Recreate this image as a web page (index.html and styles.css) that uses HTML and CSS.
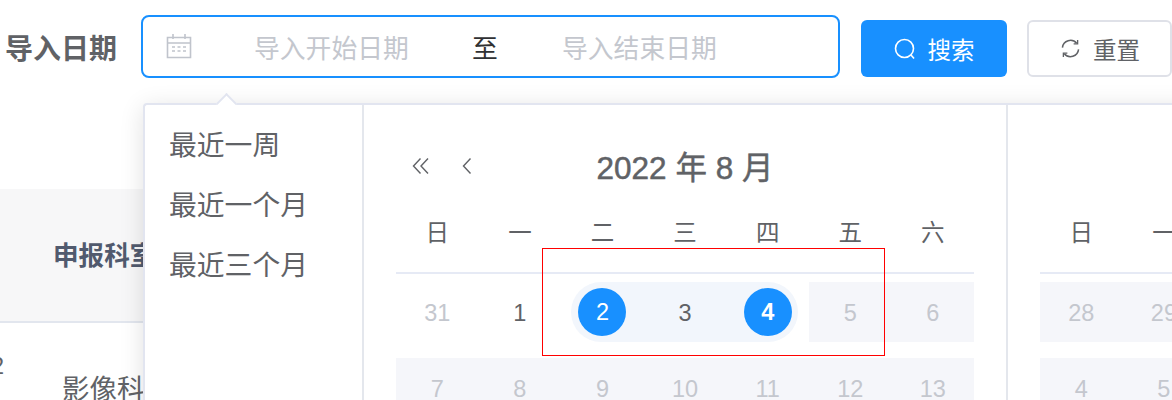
FILE: index.html
```html
<!DOCTYPE html>
<html lang="zh-CN">
<head>
<meta charset="utf-8">
<title>导入日期</title>
<link rel="stylesheet" href="styles.css">
</head>
<body>
<main class="page">
  <form class="filter">
    <span class="filter-label">导入日期</span>
    <div class="range">
      <svg class="cal-icon" viewBox="0 0 26 26" width="26" height="26" fill="none" stroke="#c0c4cc" stroke-width="1.6">
        <path d="M1.5 4.5h23v20h-23zM1.5 10h23M7 1v5M19 1v5"/>
        <path d="M6 14h3M11.5 14h3M17 14h3M6 18h3M11.5 18h3M17 18h3" stroke-width="1.4"/>
      </svg>
      <span class="range-input range-start-input">导入开始日期</span>
      <span class="range-sep">至</span>
      <span class="range-input range-end-input">导入结束日期</span>
    </div>
    <button type="button" class="btn btn-primary">
      <svg viewBox="0 0 22 22" width="22" height="22" fill="none" stroke="#fff" stroke-width="1.6"><circle cx="10.5" cy="10.5" r="9"/><path d="M17 17l3 3.5"/></svg>
      <span>搜索</span>
    </button>
    <button type="button" class="btn btn-default">
      <svg viewBox="0 0 20 20" width="19" height="19" fill="none" stroke="#606266" stroke-width="1.6"><path d="M1.5 9A8.5 8.5 0 0 1 16.5 4.5M18.5 11A8.5 8.5 0 0 1 3.5 15.5"/><path d="M17.5 1v4.2h-4.2M2.5 19v-4.2h4.2" stroke-width="1.4"/></svg>
      <span>重置</span>
    </button>
  </form>

  <section class="table">
    <div class="table-head"><span class="th">申报科室</span></div>
    <div class="table-row">
      <span class="row-index">2</span>
      <span class="td">影像科室</span>
    </div>
  </section>

  <div class="picker">
    <span class="picker-arrow"></span>
    <ul class="shortcuts">
      <li>最近一周</li>
      <li>最近一个月</li>
      <li>最近三个月</li>
    </ul>
    <div class="panel panel-left">
      <header class="panel-head">
        <svg viewBox="0 0 18 18" width="18" height="18" fill="none" stroke="#606266" stroke-width="1.4"><path d="M8.5 1.5L1.5 9l7 7.5M16 1.5L9 9l7 7.5"/></svg>
        <svg class="prev-month" viewBox="0 0 12 18" width="12" height="18" fill="none" stroke="#606266" stroke-width="1.4"><path d="M9.5 1.5L2.5 9l7 7.5"/></svg>
        <span class="panel-title">2022 年 8 月</span>
      </header>
      <div class="weekdays"><span>日</span><span>一</span><span>二</span><span>三</span><span>四</span><span>五</span><span>六</span></div>
      <div class="days">
        <span class="day muted">31</span>
        <span class="day">1</span>
        <span class="day range-first"><b class="dot">2</b></span>
        <span class="day in-range">3</span>
        <span class="day range-last"><b class="dot dot-bold">4</b></span>
        <span class="day off">5</span>
        <span class="day off">6</span>
        <span class="day off">7</span>
        <span class="day off">8</span>
        <span class="day off">9</span>
        <span class="day off">10</span>
        <span class="day off">11</span>
        <span class="day off">12</span>
        <span class="day off">13</span>
      </div>
    </div>
    <div class="panel panel-right">
      <div class="weekdays"><span>日</span><span>一</span></div>
      <div class="days">
        <span class="day off">28</span>
        <span class="day off">29</span>
        <span class="day off"></span>
        <span class="day off"></span>
        <span class="day off"></span>
        <span class="day off"></span>
        <span class="day off"></span>
        <span class="day off">4</span>
        <span class="day off">5</span>
      </div>
    </div>
  </div>

  <div class="annotation"></div>
</main>
</body>
</html>
```
FILE: styles.css
```css
* { box-sizing: border-box; }
html, body { margin: 0; padding: 0; }
body {
  width: 1172px;
  height: 400px;
  overflow: hidden;
  background: #fff;
  font-family: "Liberation Sans", "Noto Sans CJK SC", sans-serif;
  color: #606266;
}
.page { position: relative; width: 1172px; height: 400px; padding-top: 15px; overflow: hidden; }

.filter {
  display: flex;
  align-items: flex-start;
  height: 63px;
  padding-left: 5px;
}
.filter > * { flex: none; }
.filter-label { align-self: center; width: 136px; font-size: 28px; font-weight: 700; color: #606266; white-space: nowrap; }
.range {
  display: flex;
  align-items: center;
  width: 699px;
  height: 63px;
  padding-left: 23px;
  border: 2px solid #1890ff;
  border-radius: 8px;
  font-size: 25.8px;
}
.cal-icon { flex: none; margin-top: -1px; }
.range-input { width: 154px; color: #c4c7ce; white-space: nowrap; }
.range-start-input { margin-left: 62px; }
.range-sep { width: 154px; text-align: center; color: #303133; }
.btn {
  display: flex;
  align-items: center;
  justify-content: center;
  gap: 12px;
  width: 146px;
  height: 57px;
  margin-top: 5px;
  padding: 0;
  border-radius: 6px;
  font: inherit;
  font-size: 23.5px;
}
.btn-primary { margin-left: 21px; background: #1890ff; border: 0; color: #fff; }
.btn-default { margin-left: 20px; width: 145px; padding-left: 2px; gap: 13px; background: #fff; border: 2px solid #dfe1e8; color: #606266; }

.table { margin-top: 111px; }
.table-head {
  display: flex;
  align-items: center;
  height: 134px;
  padding: 0 0 4px 53px;
  background: #f7f7f8;
  border-bottom: 2px solid #e2e6ee;
}
.th { font-size: 25.6px; font-weight: 700; color: #515a6e; white-space: nowrap; }
.table-row { display: flex; align-items: flex-start; height: 80px; font-size: 27.5px; }
.row-index { width: 4px; margin-top: 30px; overflow: hidden; direction: rtl; font-size: 23.5px; color: #606266; }
.td { margin-left: 58px; margin-top: 44px; white-space: nowrap; }

.picker {
  position: absolute;
  left: 143px;
  top: 103px;
  display: flex;
  width: 1100px;
  height: 360px;
  background: #fff;
  border: 2px solid #e2e5f0;
  border-right: 0;
  border-radius: 4px 0 0 0;
  box-shadow: 0 4px 24px rgba(0, 0, 0, .12);
}
.picker-arrow {
  position: absolute;
  left: 74px;
  top: -9px;
  width: 15px;
  height: 15px;
  background: #fff;
  border-top: 2px solid #e2e5f0;
  border-left: 2px solid #e2e5f0;
  transform: rotate(45deg);
}
.shortcuts {
  flex: none;
  width: 219px;
  margin: 0;
  padding: 11px 0 0 24px;
  list-style: none;
  border-right: 2px solid #e4e7ed;
  font-size: 27.8px;
  color: #606266;
}
.shortcuts li { height: 60px; line-height: 60px; white-space: nowrap; }
.panel { flex: none; padding: 0 32px; }
.panel-left { width: 644px; border-right: 2px solid #e4e7ed; }
.panel-right { width: 400px; }
.panel-head { position: relative; display: flex; align-items: center; height: 62px; margin: 30px 0 11px; padding-left: 16px; }
.prev-month { margin-left: 31px; }
.panel-title {
  position: absolute;
  left: 0;
  right: 0;
  top: 7px;
  text-align: center;
  font-size: 31.5px;
  color: #606266;
  -webkit-text-stroke: .5px #606266;
}
.weekdays {
  display: grid;
  grid-template-columns: repeat(7, 82.6px);
  align-items: center;
  height: 46px;
  font-size: 23.5px;
  color: #606266;
}
.weekdays span { text-align: center; }
.panel-right .weekdays { margin-top: 103px; }
.days {
  display: grid;
  grid-template-columns: repeat(7, 82.6px);
  grid-auto-rows: 60px;
  row-gap: 16px;
  margin-top: 18px;
  padding-top: 8px;
  border-top: 2px solid #e6eaf5;
  font-size: 23.5px;
}
.day { display: flex; align-items: center; justify-content: center; padding-top: 2px; color: #606266; }
.muted { color: #c4c7ce; }
.off { background: #f5f6fa; color: #c4c7ce; }
.in-range { background: #f2f6fc; }
.range-first { margin-left: 10px; padding-right: 10px; background: #f2f6fc; border-radius: 30px 0 0 30px; }
.range-last { margin-right: 11px; padding-left: 11px; background: #f2f6fc; border-radius: 0 30px 30px 0; }
.dot {
  display: flex;
  align-items: center;
  justify-content: center;
  width: 48px;
  height: 48px;
  margin-top: -2px;
  padding-top: 1px;
  border-radius: 50%;
  background: #1890ff;
  color: #fff;
  font-weight: 400;
}
.dot-bold { font-weight: 700; }

.annotation {
  position: absolute;
  left: 542px;
  top: 248px;
  width: 343px;
  height: 108px;
  border: 1px solid #f00;
}
```
